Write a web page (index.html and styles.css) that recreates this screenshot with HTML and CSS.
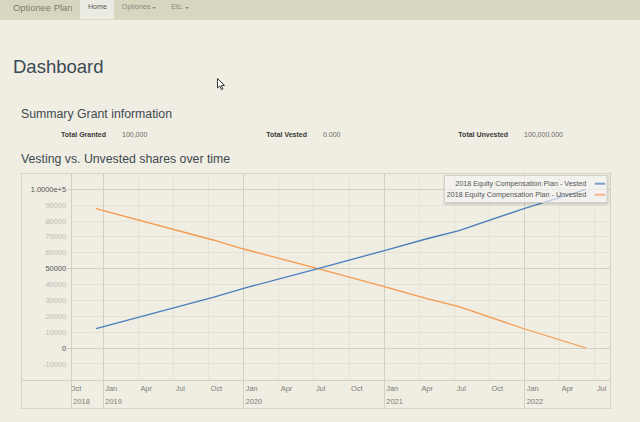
FILE: index.html
```html
<!DOCTYPE html>
<html lang="en">
<head>
<meta charset="utf-8">
<title>Optionee Plan - Dashboard</title>
<link rel="stylesheet" href="styles.css">
</head>
<body>
<nav class="navbar">
  <span class="brand">Optionee Plan</span>
  <a class="nav-item active">Home</a>
  <a class="nav-item">Optionee<span class="caret"></span></a>
  <a class="nav-item">Etc.<span class="caret"></span></a>
</nav>
<main class="page">
  <h1 class="title">Dashboard</h1>
  <section class="section">
    <h3 class="heading">Summary Grant information</h3>
    <div class="stats">
      <div class="stat"><span class="stat-label">Total Granted</span><span class="stat-value">100,000</span></div>
      <div class="stat"><span class="stat-label">Total Vested</span><span class="stat-value">0.000</span></div>
      <div class="stat"><span class="stat-label">Total Unvested</span><span class="stat-value">100,000.000</span></div>
    </div>
    <h3 class="heading heading-chart">Vesting vs. Unvested shares over time</h3>
    <div class="chart">
      <svg class="chart-svg" width="590" height="236" viewBox="0 0 590 236">
        <defs>
          <clipPath id="plotclip"><rect x="50.5" y="0" width="539" height="236"/></clipPath>
          <filter id="shadow" x="-10%" y="-30%" width="120%" height="170%">
            <feDropShadow dx="0.5" dy="1" stdDeviation="1" flood-color="#000" flood-opacity="0.25"/>
          </filter>
        </defs>
        <!-- minor horizontal grid -->
        <g class="grid-minor">
          <line x1="50" x2="589" y1="32.5" y2="32.5"/>
          <line x1="50" x2="589" y1="48.5" y2="48.5"/>
          <line x1="50" x2="589" y1="63.5" y2="63.5"/>
          <line x1="50" x2="589" y1="79.5" y2="79.5"/>
          <line x1="50" x2="589" y1="111.5" y2="111.5"/>
          <line x1="50" x2="589" y1="127.5" y2="127.5"/>
          <line x1="50" x2="589" y1="143.5" y2="143.5"/>
          <line x1="50" x2="589" y1="159.5" y2="159.5"/>
          <line x1="50" x2="589" y1="190.5" y2="190.5"/>
          <!-- minor vertical (quarters) -->
          <line x1="117.5" x2="117.5" y1="0" y2="207"/>
          <line x1="152.5" x2="152.5" y1="0" y2="207"/>
          <line x1="187.5" x2="187.5" y1="0" y2="207"/>
          <line x1="257.5" x2="257.5" y1="0" y2="207"/>
          <line x1="292.5" x2="292.5" y1="0" y2="207"/>
          <line x1="328.5" x2="328.5" y1="0" y2="207"/>
          <line x1="398.5" x2="398.5" y1="0" y2="207"/>
          <line x1="433.5" x2="433.5" y1="0" y2="207"/>
          <line x1="468.5" x2="468.5" y1="0" y2="207"/>
          <line x1="538.5" x2="538.5" y1="0" y2="207"/>
          <line x1="573.5" x2="573.5" y1="0" y2="207"/>
        </g>
        <!-- major grid -->
        <g class="grid-major">
          <line x1="46" x2="589" y1="16.5" y2="16.5"/>
          <line x1="46" x2="589" y1="95.5" y2="95.5"/>
          <line x1="46" x2="589" y1="175.5" y2="175.5"/>
          <line x1="82.5" x2="82.5" y1="0" y2="236"/>
          <line x1="222.5" x2="222.5" y1="0" y2="236"/>
          <line x1="363.5" x2="363.5" y1="0" y2="236"/>
          <line x1="503.5" x2="503.5" y1="0" y2="236"/>
          <line x1="50.5" x2="50.5" y1="0" y2="236"/>
          <line x1="0" x2="590" y1="207.5" y2="207.5"/>
        </g>
        <!-- y labels -->
        <g class="ylab">
          <text class="ylab-major" x="45" y="19">1.0000e+5</text>
          <text x="45" y="35">90000</text>
          <text x="45" y="51">80000</text>
          <text x="45" y="66">70000</text>
          <text x="45" y="82">60000</text>
          <text class="ylab-major" x="45" y="98">50000</text>
          <text x="45" y="114">40000</text>
          <text x="45" y="130">30000</text>
          <text x="45" y="146">20000</text>
          <text x="45" y="162">10000</text>
          <text class="ylab-major" x="45" y="178">0</text>
          <text x="45" y="193.5">-10000</text>
        </g>
        <!-- x labels -->
        <g class="xlab" clip-path="url(#plotclip)">
          <text x="48.7" y="217.5">Oct</text>
          <text x="84.3" y="217.5">Jan</text>
          <text x="119.4" y="217.5">Apr</text>
          <text x="154.5" y="217.5">Jul</text>
          <text x="189.6" y="217.5">Oct</text>
          <text x="224.7" y="217.5">Jan</text>
          <text x="259.8" y="217.5">Apr</text>
          <text x="294.9" y="217.5">Jul</text>
          <text x="330" y="217.5">Oct</text>
          <text x="365.3" y="217.5">Jan</text>
          <text x="400.4" y="217.5">Apr</text>
          <text x="435.5" y="217.5">Jul</text>
          <text x="470.6" y="217.5">Oct</text>
          <text x="505.7" y="217.5">Jan</text>
          <text x="540.8" y="217.5">Apr</text>
          <text x="575.9" y="217.5">Jul</text>
          <text x="52.3" y="231">2018</text>
          <text x="84.3" y="231">2019</text>
          <text x="224.7" y="231">2020</text>
          <text x="365.3" y="231">2021</text>
          <text x="505.7" y="231">2022</text>
        </g>
        <!-- data -->
        <polyline class="series-unvested" points="75,35.7 192,67 222.7,76 297,95.7 363.3,113.7 405,125.3 438,133.7 503.7,156 565,175"/>
        <polyline class="series-vested" points="75,155.6 192,124.3 222.7,115.3 297,95.6 363.3,77.6 405,66 438,57.6 503.7,35.3 565,16.3"/>
        <!-- legend -->
        <g class="legend">
          <rect class="legend-box" x="423.5" y="2.5" width="162.5" height="27" filter="url(#shadow)"/>
          <text x="565.3" y="13.4">2018 Equity Compensation Plan - Vested</text>
          <text x="565.3" y="24.4">2018 Equity Compensation Plan - Unvested</text>
          <line class="swatch-vested" x1="574" x2="584" y1="10.7" y2="10.7"/>
          <line class="swatch-unvested" x1="574" x2="584" y1="21.7" y2="21.7"/>
        </g>
      </svg>
    </div>
  </section>
</main>
<svg class="cursor" width="9" height="13" viewBox="0 0 9 13"><path d="M0.5 0.5 L0.5 10 L2.8 7.9 L4.4 11.6 L5.9 11 L4.4 7.4 L7.5 7.4 Z" fill="#fff" stroke="#222" stroke-width="0.9" stroke-linejoin="round"/></svg>
</body>
</html>
```
FILE: styles.css
```css
html, body {
  margin: 0;
  padding: 0;
}
body {
  background: #f0ede2;
  font-family: "Liberation Sans", Arial, Helvetica, sans-serif;
  color: #333;
  width: 640px;
  height: 422px;
  overflow: hidden;
  position: relative;
}
.navbar {
  display: flex;
  align-items: stretch;
  height: 20px;
  background: #d9d6bf;
  border-bottom: 1px solid #dcd9c8;
  box-sizing: border-box;
}
.brand {
  font-size: 9.4px;
  line-height: 15px;
  color: #7d7d6e;
  padding: 0 8px 0 13px;
}
.nav-item {
  font-size: 7.1px;
  line-height: 15px;
  padding: 0 7.5px 5px;
  color: #8a8a7c;
  display: flex;
  align-items: flex-start;
}
.nav-item.active {
  background: #ebeae3;
  color: #5a5a55;
}
.caret {
  display: inline-block;
  width: 0;
  height: 0;
  margin: 6.5px 0 0 1.5px;
  border-top: 2.5px solid #8a8a7c;
  border-left: 2.2px solid transparent;
  border-right: 2.2px solid transparent;
}
.page {
  padding: 0 13px;
}
.title {
  margin: 36px 0 0;
  font-size: 18.5px;
  line-height: 22px;
  font-weight: normal;
  color: #3b4a55;
}
.section {
  padding-left: 8px;
}
.heading {
  margin: 29px 0 0;
  font-size: 12.3px;
  line-height: 15px;
  font-weight: normal;
  color: #404a52;
}
.heading-chart {
  margin-top: 12px;
}
.stats {
  display: grid;
  grid-template-columns: 201px 201px 201px;
  margin-top: 8px;
  font-size: 7px;
  line-height: 10px;
}
.stat {
  display: grid;
  grid-template-columns: 85px auto;
  column-gap: 16px;
}
.stat-label {
  text-align: right;
  font-weight: bold;
  color: #3a3a3a;
}
.stat-value {
  color: #6a6a6a;
}
.chart {
  margin-top: 6px;
  width: 590px;
  height: 236px;
}
.chart-svg {
  display: block;
  font-family: "Liberation Sans", Arial, sans-serif;
}
.chart-svg > rect.frame {
  fill: none;
}
.chart {
  outline: none;
  box-shadow: inset 0 0 0 1px #d7d4c7;
}
.grid-minor line {
  stroke: #e6e3d6;
  stroke-width: 1;
}
.grid-major line {
  stroke: #d3d0c3;
  stroke-width: 1;
}
.ylab text {
  font-size: 7.4px;
  text-anchor: end;
  fill: #bdbab0;
}
.ylab text.ylab-major {
  fill: #555;
}
.xlab text {
  font-size: 7.4px;
  fill: #7d7d78;
}
.series-vested {
  fill: none;
  stroke: #4a7ebb;
  stroke-width: 1.3;
}
.series-unvested {
  fill: none;
  stroke: #f59a4e;
  stroke-width: 1.3;
}
.legend-box {
  fill: #ffffff;
  fill-opacity: 0.6;
  stroke: #d0d0cc;
  stroke-width: 1;
}
.legend text {
  font-size: 7.2px;
  text-anchor: end;
  fill: #555;
}
.swatch-vested {
  stroke: #7a9cc8;
  stroke-width: 2;
}
.swatch-unvested {
  stroke: #f6b485;
  stroke-width: 2;
}
.cursor {
  position: absolute;
  left: 217px;
  top: 78px;
}
```
